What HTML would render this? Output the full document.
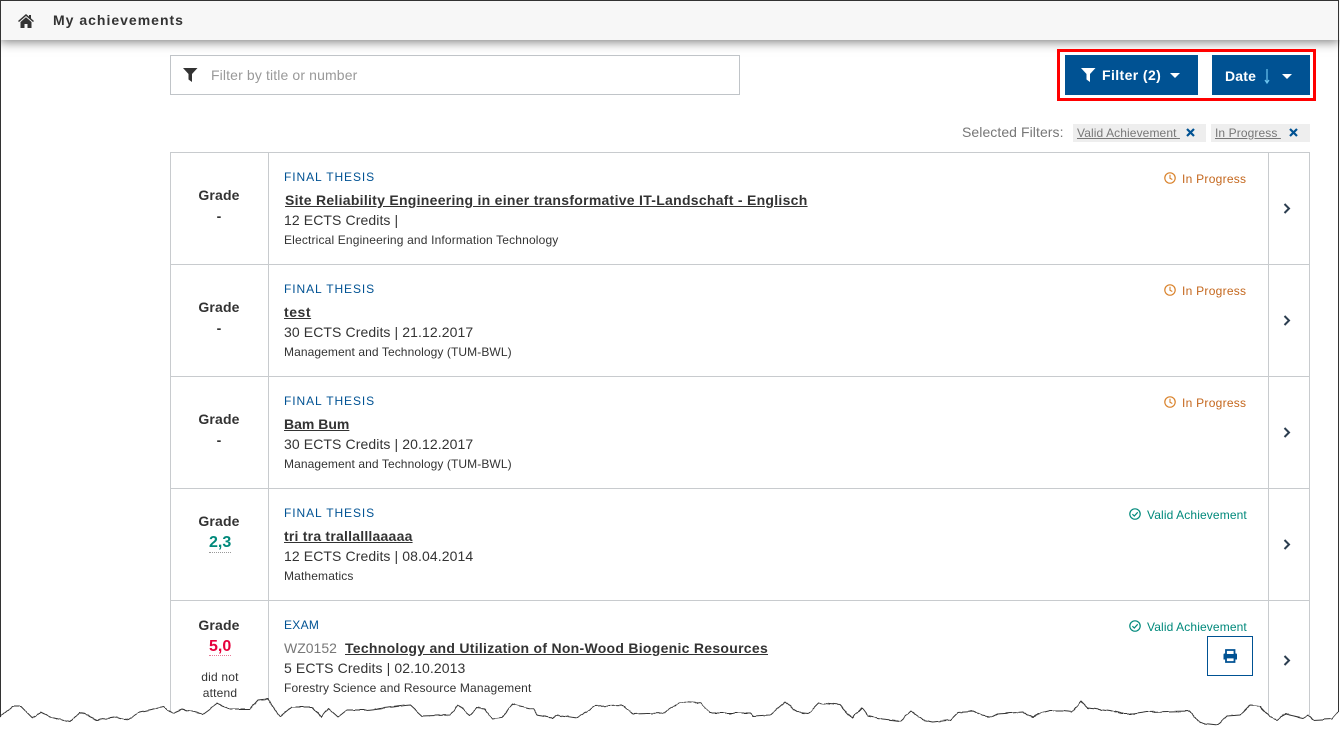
<!DOCTYPE html>
<html><head><meta charset="utf-8"><title>My achievements</title>
<style>
*{box-sizing:border-box}
html,body{margin:0;padding:0;background:#fff}
body{width:1340px;height:730px;position:relative;overflow:hidden;font-family:"Liberation Sans",sans-serif;color:#333}
.a{position:absolute;white-space:nowrap}
.hdr{position:absolute;left:0;top:0;width:1340px;height:40px;background:#f7f7f7;box-shadow:0 2px 10px rgba(0,0,0,.5)}
.btn{position:absolute;background:#005293;color:#fff;font-weight:bold;font-size:14px;top:55px;height:40px}
.tag{position:absolute;top:124px;height:18px;background:#eee}
.tag span{position:absolute;left:4px;top:1px;font-size:12px;line-height:16px;color:#777;text-decoration:underline;white-space:pre;letter-spacing:.1px}
.hl{position:absolute;left:170px;width:1140px;height:1px;background:#c8cbce}
.vl{position:absolute;top:152px;width:1px;height:570px;background:#c8cbce}
.grade{font-size:14px;font-weight:bold;line-height:16px;width:98px;left:170px;text-align:center;letter-spacing:.15px}
.type{font-size:12px;line-height:14px;color:#005293;letter-spacing:.92px;left:284px}
.title{font-size:14px;line-height:16px;font-weight:bold;text-decoration:underline;color:#333;letter-spacing:.28px}
.cred{font-size:14px;line-height:16px;left:284px;letter-spacing:.1px}
.dept{font-size:12px;line-height:14px;left:284px;letter-spacing:.09px}
.prog{font-size:12px;line-height:14px;color:#c4671d;left:1182px;letter-spacing:.27px}
.valid{font-size:12px;line-height:14px;color:#00897b;left:1147px;letter-spacing:.12px}
svg{position:absolute;overflow:visible}
</style></head><body>

<div class="hdr"></div>
<svg style="left:18px;top:14px" width="16" height="14" viewBox="0 0 16 14"><path d="M8 0 L11 2.6 V1 H13 V4.4 L16 7 L15 8 L8 2 L1 8 L0 7 Z" fill="#333"/><path d="M2.5 8 L8 3.3 L13.500 8 V14 H9.500 V10 H6.500 V14 H2.500 Z" fill="#333"/></svg>
<div class="a" style="left:53px;top:12px;font-size:14px;line-height:16px;font-weight:bold;letter-spacing:1px">My achievements</div>

<div class="a" style="left:170px;top:55px;width:570px;height:40px;border:1px solid #c0c4c8"></div>
<svg style="left:183px;top:68px" width="15" height="14" viewBox="0 0 15 14"><path d="M0 0 H14.500 L9 6 V14 L5.500 11.500 V6 Z" fill="#333"/></svg>
<div class="a" style="left:211px;top:67px;font-size:14px;line-height:16px;color:#999;letter-spacing:.13px">Filter by title or number</div>

<div class="a" style="left:1057px;top:49px;width:259px;height:52px;border:3px solid #f00"></div>
<div class="btn" style="left:1065px;width:133px"></div>
<svg style="left:1081px;top:68px" width="15" height="14" viewBox="0 0 15 14"><path d="M0 0 H14.500 L9 6 V14 L5.500 11.500 V6 Z" fill="#fff"/></svg>
<div class="a" style="left:1102px;top:67px;font-size:14px;line-height:16px;font-weight:bold;color:#fff;letter-spacing:.4px">Filter (2)</div>
<svg style="left:1170px;top:73px" width="10" height="5" viewBox="0 0 10 5"><path d="M0 0 H10 L5 5 Z" fill="#fff"/></svg>
<div class="btn" style="left:1212px;width:98px"></div>
<div class="a" style="left:1225px;top:68px;font-size:14px;line-height:16px;font-weight:bold;color:#fff;letter-spacing:.2px">Date</div>
<svg style="left:1263px;top:69px" width="8" height="15" viewBox="0 0 8 15"><path d="M4 0 V13.500 M2 11 L4 14 L6 11" fill="none" stroke="#6cc4ee" stroke-width="1.200"/></svg>
<svg style="left:1282px;top:74px" width="10" height="5" viewBox="0 0 10 5"><path d="M0 0 H10 L5 5 Z" fill="#fff"/></svg>

<div class="a" style="left:962px;top:124px;font-size:14px;line-height:16px;color:#777;letter-spacing:.07px">Selected Filters:</div>
<div class="tag" style="left:1073px;width:133px"><span>Valid Achievement </span></div>
<svg style="left:1186px;top:128px" width="9" height="9" viewBox="0 0 9 9"><path d="M1 1 L8 8 M8 1 L1 8" stroke="#005293" stroke-width="2.200"/></svg>
<div class="tag" style="left:1211px;width:99px"><span>In Progress </span></div>
<svg style="left:1289px;top:128px" width="9" height="9" viewBox="0 0 9 9"><path d="M1 1 L8 8 M8 1 L1 8" stroke="#005293" stroke-width="2.200"/></svg>

<div class="hl" style="top:152px"></div>
<div class="hl" style="top:264px"></div>
<div class="hl" style="top:376px"></div>
<div class="hl" style="top:488px"></div>
<div class="hl" style="top:600px"></div>
<div class="vl" style="left:170px"></div>
<div class="vl" style="left:268px"></div>
<div class="vl" style="left:1268px"></div>
<div class="vl" style="left:1309px"></div>

<!-- row 1 -->
<div class="a grade" style="top:187px">Grade</div>
<div class="a grade" style="top:208px">-</div>
<div class="a type" style="top:170px">FINAL THESIS</div>
<div class="a title" style="left:285px;top:192px">Site Reliability Engineering in einer transformative IT-Landschaft - Englisch</div>
<div class="a cred" style="top:212px">12 ECTS Credits |</div>
<div class="a dept" style="top:233px;letter-spacing:.16px">Electrical Engineering and Information Technology</div>
<svg style="left:1164px;top:172px" width="12" height="12" viewBox="0 0 12 12"><circle cx="6" cy="6" r="5.200" fill="none" stroke="#d9822b" stroke-width="1.200"/><path d="M6 2.800 V6.300 L8.300 7.500" fill="none" stroke="#d9822b" stroke-width="1.100"/></svg>
<div class="a prog" style="top:172px">In Progress</div>
<svg style="left:1283px;top:203px" width="8" height="11" viewBox="0 0 8 11"><path d="M1.500 1 L6 5.500 L1.500 10" fill="none" stroke="#2c3e50" stroke-width="2"/></svg>

<!-- row 2 -->
<div class="a grade" style="top:299px">Grade</div>
<div class="a grade" style="top:320px">-</div>
<div class="a type" style="top:282px">FINAL THESIS</div>
<div class="a title" style="left:284px;top:304px;letter-spacing:.55px">test</div>
<div class="a cred" style="top:324px">30 ECTS Credits | 21.12.2017</div>
<div class="a dept" style="top:345px">Management and Technology (TUM-BWL)</div>
<svg style="left:1164px;top:284px" width="12" height="12" viewBox="0 0 12 12"><circle cx="6" cy="6" r="5.200" fill="none" stroke="#d9822b" stroke-width="1.200"/><path d="M6 2.800 V6.300 L8.300 7.500" fill="none" stroke="#d9822b" stroke-width="1.100"/></svg>
<div class="a prog" style="top:284px">In Progress</div>
<svg style="left:1283px;top:315px" width="8" height="11" viewBox="0 0 8 11"><path d="M1.500 1 L6 5.500 L1.500 10" fill="none" stroke="#2c3e50" stroke-width="2"/></svg>

<!-- row 3 -->
<div class="a grade" style="top:411px">Grade</div>
<div class="a grade" style="top:432px">-</div>
<div class="a type" style="top:394px">FINAL THESIS</div>
<div class="a title" style="left:284px;top:416px;letter-spacing:0">Bam Bum</div>
<div class="a cred" style="top:436px">30 ECTS Credits | 20.12.2017</div>
<div class="a dept" style="top:457px">Management and Technology (TUM-BWL)</div>
<svg style="left:1164px;top:396px" width="12" height="12" viewBox="0 0 12 12"><circle cx="6" cy="6" r="5.200" fill="none" stroke="#d9822b" stroke-width="1.200"/><path d="M6 2.800 V6.300 L8.300 7.500" fill="none" stroke="#d9822b" stroke-width="1.100"/></svg>
<div class="a prog" style="top:396px">In Progress</div>
<svg style="left:1283px;top:427px" width="8" height="11" viewBox="0 0 8 11"><path d="M1.500 1 L6 5.500 L1.500 10" fill="none" stroke="#2c3e50" stroke-width="2"/></svg>

<!-- row 4 -->
<div class="a grade" style="top:513px">Grade</div>
<div class="a" style="left:209px;top:535px;height:18px;font-size:16px;line-height:16px;font-weight:bold;color:#00897b;border-bottom:1px dotted #999">2,3</div>
<div class="a type" style="top:506px">FINAL THESIS</div>
<div class="a title" style="left:284px;top:528px;letter-spacing:.22px">tri tra trallalllaaaaa</div>
<div class="a cred" style="top:548px">12 ECTS Credits | 08.04.2014</div>
<div class="a dept" style="top:569px;letter-spacing:.14px">Mathematics</div>
<svg style="left:1129px;top:508px" width="12" height="12" viewBox="0 0 12 12"><circle cx="6" cy="6" r="5.200" fill="none" stroke="#00897b" stroke-width="1.200"/><path d="M3.400 6.200 L5.300 8 L8.700 4.300" fill="none" stroke="#00897b" stroke-width="1.200"/></svg>
<div class="a valid" style="top:508px">Valid Achievement</div>
<svg style="left:1283px;top:539px" width="8" height="11" viewBox="0 0 8 11"><path d="M1.500 1 L6 5.500 L1.500 10" fill="none" stroke="#2c3e50" stroke-width="2"/></svg>

<!-- row 5 -->
<div class="a grade" style="top:617px">Grade</div>
<div class="a" style="left:209px;top:638px;height:18px;font-size:16px;line-height:17px;font-weight:bold;color:#e6003c;border-bottom:1px dotted #e87a98">5,0</div>
<div class="a" style="left:171px;width:98px;text-align:center;top:669px;font-size:12px;line-height:16px;white-space:normal;letter-spacing:.2px"><div>did not</div><div>attend</div></div>
<div class="a" style="left:284px;top:618px;font-size:12px;line-height:14px;color:#005293;letter-spacing:.3px">EXAM</div>
<div class="a" style="left:284px;top:640px;font-size:14px;line-height:16px;color:#777">WZ0152</div>
<div class="a title" style="left:345px;top:640px">Technology and Utilization of Non-Wood Biogenic Resources</div>
<div class="a cred" style="top:660px">5 ECTS Credits | 02.10.2013</div>
<div class="a dept" style="top:681px;letter-spacing:.15px">Forestry Science and Resource Management</div>
<svg style="left:1129px;top:620px" width="12" height="12" viewBox="0 0 12 12"><circle cx="6" cy="6" r="5.200" fill="none" stroke="#00897b" stroke-width="1.200"/><path d="M3.400 6.200 L5.300 8 L8.700 4.300" fill="none" stroke="#00897b" stroke-width="1.200"/></svg>
<div class="a valid" style="top:620px">Valid Achievement</div>
<div class="a" style="left:1207px;top:636px;width:46px;height:40px;border:1px solid #005293"></div>
<svg style="left:1223px;top:649px" width="15" height="14" viewBox="0 0 15 14"><path d="M.5 5.500 Q.5 4.500 1.500 4.500 H13 Q14 4.500 14 5.500 V10.500 H.5 Z" fill="#005293"/><path d="M3 5 V1 H11.500 V5" fill="#fff" stroke="#005293" stroke-width="1.800"/><path d="M3 8.500 H11.500 V13 H3 Z" fill="#fff" stroke="#005293" stroke-width="1.800"/></svg>
<svg style="left:1283px;top:655px" width="8" height="11" viewBox="0 0 8 11"><path d="M1.500 1 L6 5.500 L1.500 10" fill="none" stroke="#2c3e50" stroke-width="2"/></svg>

<!-- torn edge and window border -->
<svg style="left:0;top:0" width="1340" height="730" viewBox="0 0 1340 730">
<defs><filter id="rough" filterUnits="userSpaceOnUse" x="-5" y="680" width="1350" height="55"><feTurbulence type="fractalNoise" baseFrequency="0.12" numOctaves="2" seed="4" result="n"/><feDisplacementMap in="SourceGraphic" in2="n" scale="3" xChannelSelector="R" yChannelSelector="G"/></filter></defs>
<g filter="url(#rough)">
<path d="M0 717 L13 706 L20 706 L32 718 L40 712 L50 717 L70 722 L80 712 L97 720 L117 717 L128 720 L140 712 L163 707 L173 713 L182 709 L203 714 L218 703 L228 709 L250 709 L258 700 L268 699 L280 717 L292 707 L312 707 L321 717 L328 708 L338 717 L347 710 L367 710 L410 705 L422 716 L450 715 L458 705 L470 715 L477 708 L485 709 L492 719 L502 718 L512 704 L533 709 L537 715 L552 718 L558 715 L577 718 L595 706 L622 705 L633 714 L663 713 L680 702 L700 703 L710 713 L750 713 L753 716 L770 715 L785 702 L797 712 L808 713 L818 703 L840 705 L852 718 L862 708 L868 716 L882 719 L900 721 L911 711 L923 720 L933 722 L950 720 L958 712 L973 711 L982 715 L992 717 L998 714 L1023 712 L1033 717 L1042 713 L1050 711 L1063 711 L1072 712 L1081 701 L1088 708 L1110 711 L1122 714 L1133 714 L1147 712 L1190 711 L1200 723 L1218 725 L1227 716 L1240 715 L1250 705 L1260 706 L1270 717 L1277 720 L1285 714 L1303 718 L1308 715 L1313 720 L1332 719 L1338 712 L1345 712 L1345 735 L-5 735 L-5 717 Z" fill="#fff"/>
<path d="M0 717 L13 706 L20 706 L32 718 L40 712 L50 717 L70 722 L80 712 L97 720 L117 717 L128 720 L140 712 L163 707 L173 713 L182 709 L203 714 L218 703 L228 709 L250 709 L258 700 L268 699 L280 717 L292 707 L312 707 L321 717 L328 708 L338 717 L347 710 L367 710 L410 705 L422 716 L450 715 L458 705 L470 715 L477 708 L485 709 L492 719 L502 718 L512 704 L533 709 L537 715 L552 718 L558 715 L577 718 L595 706 L622 705 L633 714 L663 713 L680 702 L700 703 L710 713 L750 713 L753 716 L770 715 L785 702 L797 712 L808 713 L818 703 L840 705 L852 718 L862 708 L868 716 L882 719 L900 721 L911 711 L923 720 L933 722 L950 720 L958 712 L973 711 L982 715 L992 717 L998 714 L1023 712 L1033 717 L1042 713 L1050 711 L1063 711 L1072 712 L1081 701 L1088 708 L1110 711 L1122 714 L1133 714 L1147 712 L1190 711 L1200 723 L1218 725 L1227 716 L1240 715 L1250 705 L1260 706 L1270 717 L1277 720 L1285 714 L1303 718 L1308 715 L1313 720 L1332 719 L1338 712" fill="none" stroke="#333" stroke-width="1" stroke-linejoin="round"/>
</g>
<path d="M.5 717 V.5 H1338.500 V712" fill="none" stroke="#333" stroke-width="1"/>
</svg>
</body></html>
